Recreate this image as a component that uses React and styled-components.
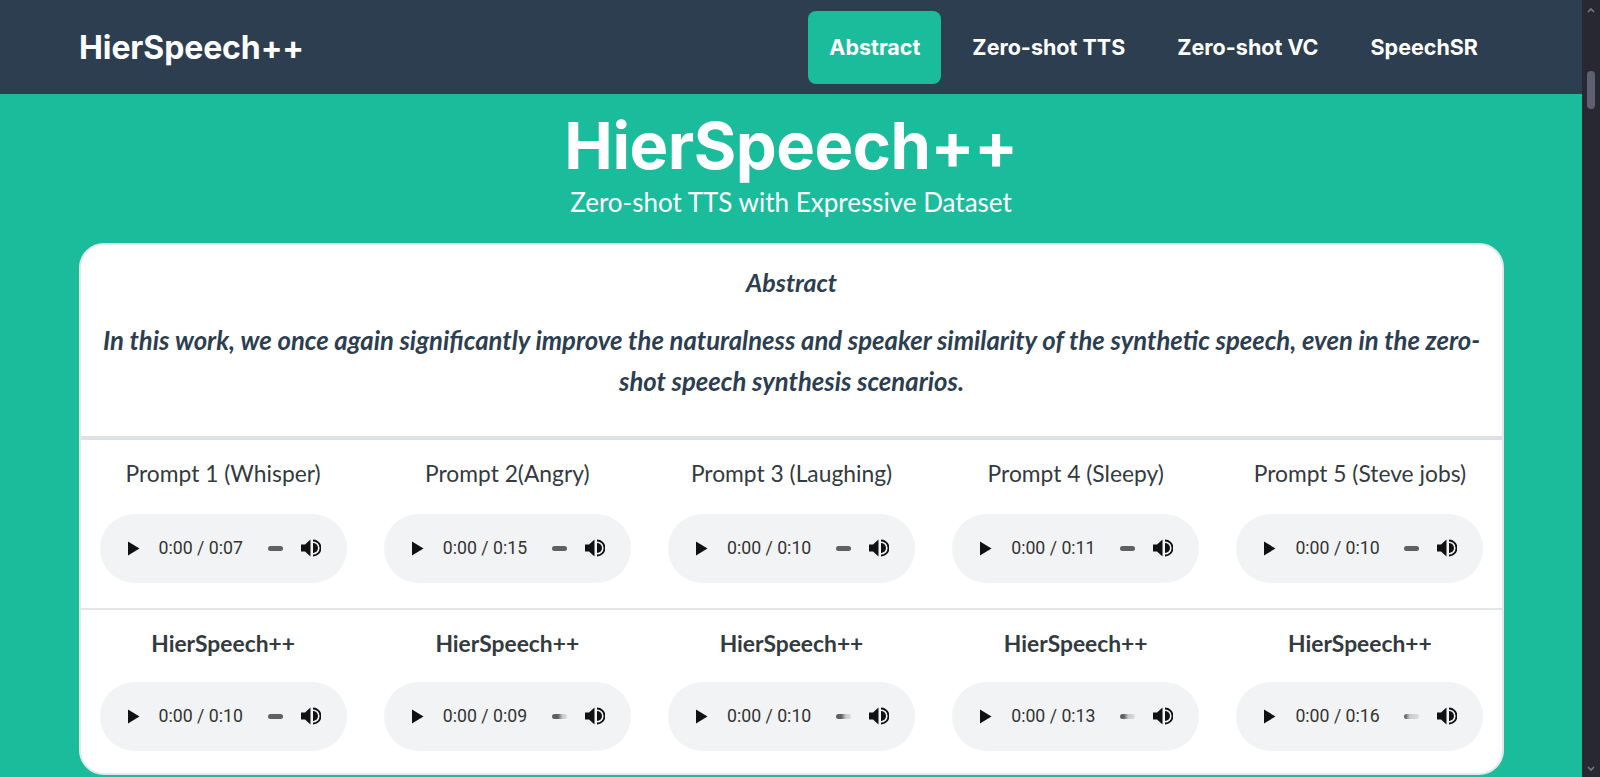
import React from "react"
import styled, { createGlobalStyle } from "styled-components"

const colours = {
  navy: "#2c3e50",
  teal: "#1abc9c",
  white: "#ffffff",
  text: "#2c3e50",
  player: "#f1f3f4",
}

const GlobalStyle = createGlobalStyle`
  html, body {
    margin: 0;
    padding: 0;
    height: 100%;
    overflow: hidden;
  }
  body {
    font-family: Lato, "Open Sans", sans-serif;
    background-color: ${colours.teal};
  }
  * {
    box-sizing: border-box;
  }
`

const Page = styled.div`
  display: flex;
  height: 100vh;
  overflow: hidden;
`

const Main = styled.main`
  flex: 1;
  min-width: 0;
  background-color: ${colours.teal};
  overflow: hidden;
`

const Navbar = styled.nav`
  height: 94px;
  background-color: ${colours.navy};
  display: flex;
  align-items: center;
  justify-content: space-between;
  padding: 0 83px 0 79px;
`

const Brand = styled.a`
  font-family: Inter, "Open Sans", sans-serif;
  font-weight: 700;
  font-size: 32px;
  color: ${colours.white};
  text-decoration: none;
  letter-spacing: -0.1px;
`

const NavList = styled.ul`
  display: flex;
  align-items: center;
  gap: 10px;
  list-style: none;
  margin: 0;
  padding: 0;
`

const NavLink = styled.a`
  display: flex;
  align-items: center;
  height: 73px;
  padding: 0 21px;
  border-radius: 8px;
  font-family: Inter, "Open Sans", sans-serif;
  font-weight: 700;
  font-size: 21.5px;
  color: ${colours.white};
  text-decoration: none;
  background-color: ${(p) => (p.$active ? colours.teal : "transparent")};
`

const Masthead = styled.header`
  text-align: center;
  color: ${colours.white};
  padding: 16px 0 24px;
`

const HeroTitle = styled.h1`
  margin: 0;
  font-family: Inter, "Open Sans", sans-serif;
  font-weight: 700;
  font-size: 65px;
  line-height: 1.1;
  letter-spacing: -0.5px;
`

const HeroSub = styled.p`
  margin: 3px 0 0;
  font-family: Lato, sans-serif;
  font-size: 26px;
  line-height: 34px;
`

const Card = styled.section`
  margin: 0 78px 0 79px;
  background-color: ${colours.white};
  border: 2px solid #e4e8eb;
  border-radius: 25px;
  overflow: hidden;
`

const AbstractSection = styled.div`
  padding: 19px 20px 34px;
  text-align: center;
  color: ${colours.text};
  font-style: italic;
  font-weight: 700;
`

const AbstractTitle = styled.h2`
  margin: 0 0 20px;
  font-size: 25px;
  line-height: 36px;
  font-weight: 700;
`

const AbstractText = styled.p`
  margin: 0;
  font-size: 25.7px;
  line-height: 41px;
`

const SampleRow = styled.div`
  display: grid;
  grid-template-columns: repeat(5, 1fr);
  border-top: ${(p) => (p.$thick ? "4px solid #dee2e6" : "2px solid #e3e5e7")};
  padding: ${(p) => (p.$thick ? "20px 0 25px" : "20px 0 22px")};
`

const Cell = styled.div`
  display: flex;
  flex-direction: column;
  align-items: center;
  gap: ${(p) => (p.$tight ? "26px" : "28px")};
`

const Label = styled.div`
  font-size: 22.8px;
  line-height: 26px;
  color: #333a40;
  font-weight: ${(p) => (p.$bold ? 700 : 400)};
`

const Player = styled.div`
  width: 247px;
  height: 69px;
  border-radius: 35px;
  background-color: ${colours.player};
  display: flex;
  align-items: center;
  padding-left: 27px;
`

const PlayIcon = styled.svg`
  width: 13px;
  height: 15px;
  flex: none;
`

const Time = styled.span`
  margin-left: 19px;
  width: 109px;
  font-family: Roboto, "Liberation Sans", sans-serif;
  font-size: 17.7px;
  color: #333;
`

const Slider = styled.span`
  width: 15px;
  height: 5px;
  border-radius: 3px;
  background: ${(p) =>
    p.$loaded >= 100
      ? "#5f6061"
      : `linear-gradient(to right, #5f6061 0%, #5f6061 ${p.$loaded}%, #c9cacb ${p.$loaded + 30}%, #dcdcdc 100%)`};
`

const SpeakerIcon = styled.svg`
  margin-left: 17px;
  width: 21px;
  height: 20px;
  flex: none;
`

const Scrollbar = styled.div`
  width: 18px;
  flex: none;
  background-color: #272832;
  display: flex;
  flex-direction: column;
  align-items: center;
  padding-top: 7px;
`

const ScrollThumb = styled.div`
  width: 8px;
  height: 38px;
  margin-top: 57px;
  border-radius: 4px;
  background-color: #5e6072;
`

const ScrollSpacer = styled.div`
  flex: 1;
`

const Chevron = ({ down }) => (
  <svg width="10" height="7" viewBox="0 0 10 7" style={{ marginBottom: down ? 5 : 0 }}>
    <path
      d={down ? "M2 2 L5 5 L8 2" : "M2 5 L5 2 L8 5"}
      stroke="#767786"
      strokeWidth="1.6"
      fill="none"
    />
  </svg>
)

const AudioPlayer = ({ duration, loaded = 100 }) => (
  <Player>
    <PlayIcon viewBox="0 0 13 15">
      <path d="M1 0.5 L12.5 7.5 L1 14.5 Z" fill="#111" />
    </PlayIcon>
    <Time>0:00 / {duration}</Time>
    <Slider $loaded={loaded} />
    <SpeakerIcon viewBox="0 0 21 20">
      <path d="M1 6.5 H5 L10.5 1.5 V18.5 L5 13.5 H1 Z" fill="#111" />
      <path d="M13 5 A5 5 0 0 1 13 15 Z" fill="#111" />
      <path d="M13 2.5 A7.5 7.5 0 0 1 13 17.5" stroke="#111" strokeWidth="1.8" fill="none" />
    </SpeakerIcon>
  </Player>
)

const prompts = [
  { label: "Prompt 1 (Whisper)", duration: "0:07" },
  { label: "Prompt 2(Angry)", duration: "0:15" },
  { label: "Prompt 3 (Laughing)", duration: "0:10" },
  { label: "Prompt 4 (Sleepy)", duration: "0:11" },
  { label: "Prompt 5 (Steve jobs)", duration: "0:10" },
]

const outputs = [
  { duration: "0:10", loaded: 100 },
  { duration: "0:09", loaded: 40 },
  { duration: "0:10", loaded: 35 },
  { duration: "0:13", loaded: 25 },
  { duration: "0:16", loaded: 8 },
]

const navItems = ["Abstract", "Zero-shot TTS", "Zero-shot VC", "SpeechSR"]

const App = () => {
  return (
    <Page>
      <GlobalStyle />
      <Main>
        <Navbar>
          <Brand href="#">HierSpeech++</Brand>
          <NavList>
            {navItems.map((item, i) => (
              <li key={item}>
                <NavLink href="#" $active={i === 0}>
                  {item}
                </NavLink>
              </li>
            ))}
          </NavList>
        </Navbar>
        <Masthead>
          <HeroTitle>HierSpeech++</HeroTitle>
          <HeroSub>Zero-shot TTS with Expressive Dataset</HeroSub>
        </Masthead>
        <Card>
          <AbstractSection>
            <AbstractTitle>Abstract</AbstractTitle>
            <AbstractText>
              In this work, we once again significantly improve the naturalness and speaker
              similarity of the synthetic speech, even in the zero-shot speech synthesis
              scenarios.
            </AbstractText>
          </AbstractSection>
          <SampleRow $thick>
            {prompts.map((p) => (
              <Cell key={p.label}>
                <Label>{p.label}</Label>
                <AudioPlayer duration={p.duration} />
              </Cell>
            ))}
          </SampleRow>
          <SampleRow>
            {outputs.map((o, i) => (
              <Cell key={i} $tight>
                <Label $bold>HierSpeech++</Label>
                <AudioPlayer duration={o.duration} loaded={o.loaded} />
              </Cell>
            ))}
          </SampleRow>
        </Card>
      </Main>
      <Scrollbar>
        <Chevron />
        <ScrollThumb />
        <ScrollSpacer />
        <Chevron down />
      </Scrollbar>
    </Page>
  )
}

export default App
